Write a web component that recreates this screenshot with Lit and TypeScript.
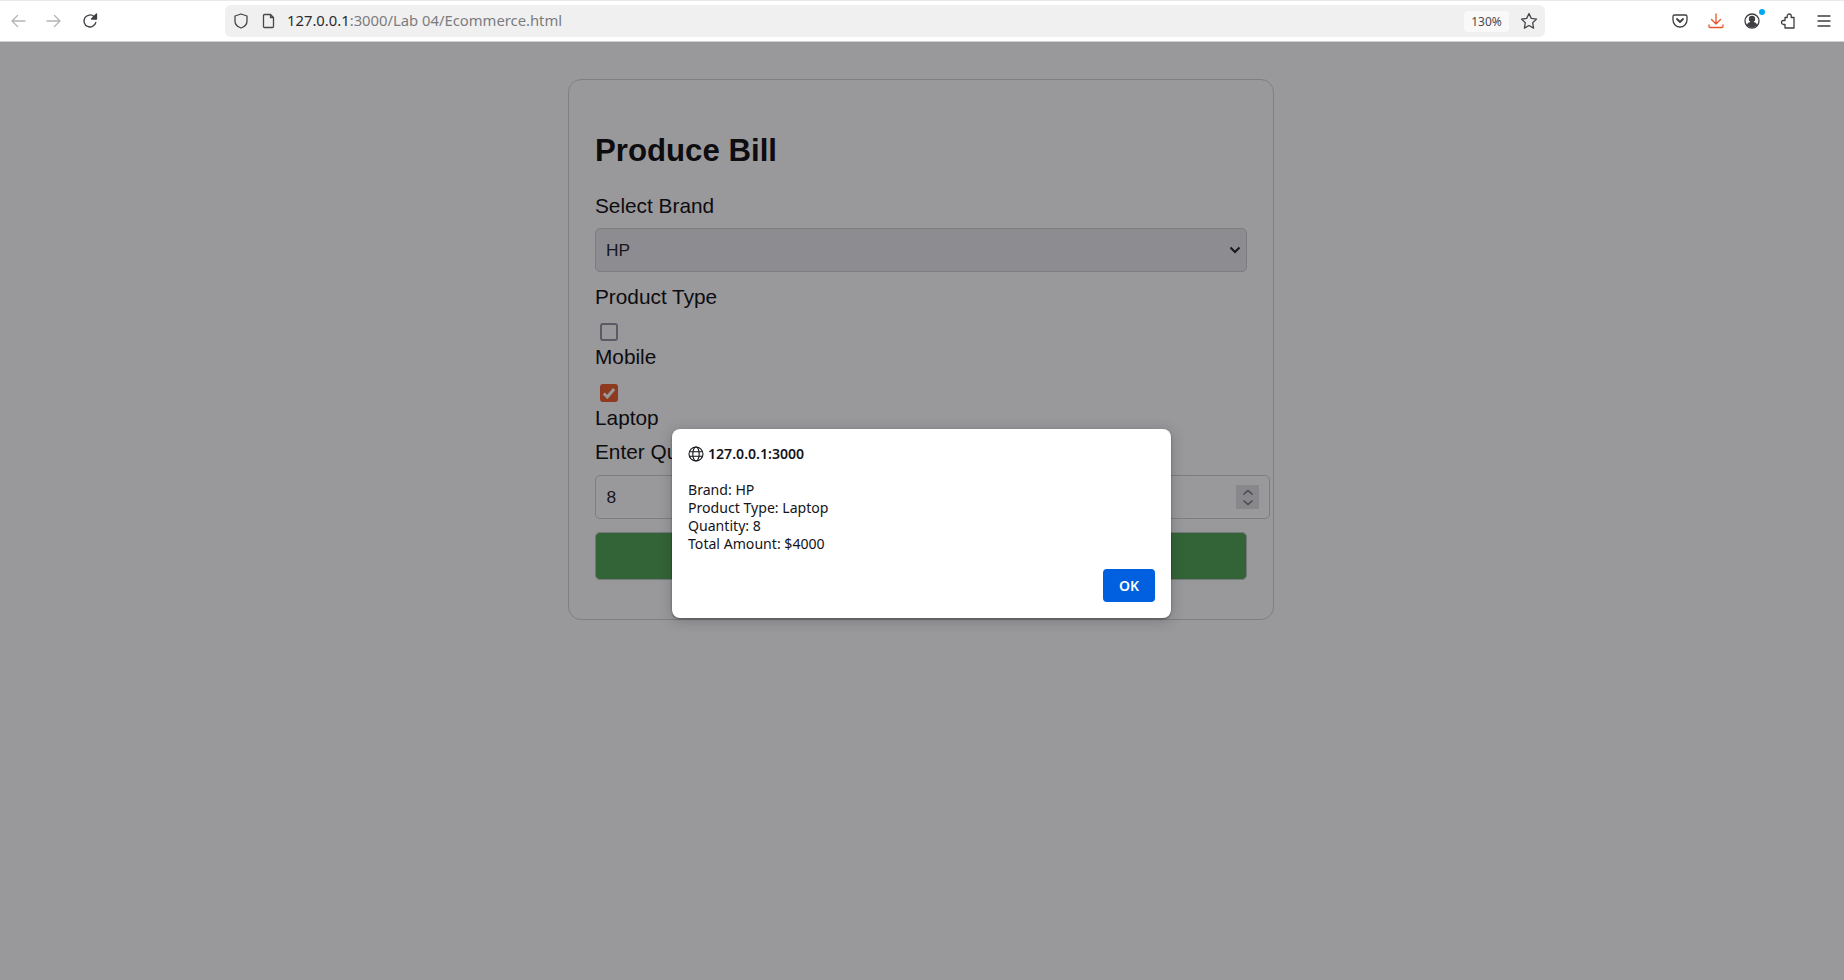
import { LitElement, css, html } from "lit";
import { customElement } from "lit/decorators.js";

@customElement("app-root")
export class AppRoot extends LitElement {
  static styles = css`
    :host {
      display: block;
      height: 980px;
      overflow: hidden;
      background: #fff;
      color: #15141a;
    }

    /* browser toolbar */
    .toolbar {
      display: flex;
      align-items: center;
      box-sizing: border-box;
      height: 42px;
      padding-right: 2px;
      background: #fff;
      border-top: 1px solid #e9e9e9;
      border-bottom: 1px solid #cfcfd3;
    }
    .tool {
      display: flex;
      flex: none;
      align-items: center;
      justify-content: center;
      width: 36px;
      height: 40px;
    }
    .tool svg {
      fill: none;
      stroke: #3f3f44;
      stroke-width: 1.3;
      stroke-linecap: round;
      stroke-linejoin: round;
    }
    .tool.off svg {
      stroke: #b4b4b6;
    }
    .tool.orange svg {
      stroke: #e8552c;
    }
    .urlbar {
      display: flex;
      flex: none;
      align-items: center;
      box-sizing: border-box;
      width: 1320px;
      height: 32px;
      margin-left: 117px;
      padding-left: 8px;
      border-radius: 6px;
      background: #f0f0f0;
      font: 14.8px "Noto Sans", "Open Sans", sans-serif;
    }
    .urlbar svg {
      flex: none;
      fill: none;
      stroke: #47474c;
      stroke-width: 1.3;
      stroke-linejoin: round;
    }
    .urlbar .file {
      margin-left: 12px;
    }
    .url {
      margin-left: 10px;
      padding-bottom: 2px;
      color: #7c7c80;
      white-space: pre;
    }
    .url b {
      font-weight: 400;
      color: #2b2a30;
    }
    .zoom {
      display: flex;
      align-items: center;
      justify-content: center;
      width: 45px;
      height: 21px;
      margin-left: auto;
      border-radius: 4px;
      background: #f9f9f9;
      font-size: 12px;
      color: #4a4a4f;
    }
    .star {
      margin: 0 7px 0 11px;
    }
    .actions {
      display: flex;
      margin-left: auto;
    }
    .badge {
      position: relative;
    }
    .badge::after {
      content: "";
      position: absolute;
      top: 8px;
      right: 5px;
      width: 6px;
      height: 6px;
      border-radius: 50%;
      background: #00a8f0;
    }

    /* the page */
    main {
      position: relative;
      height: 938px;
      padding-top: 37px;
      box-sizing: border-box;
      font-family: "Liberation Sans", Arial, sans-serif;
      color: #000;
    }
    .card {
      box-sizing: border-box;
      width: 706px;
      height: 541px;
      margin-left: 568px;
      padding: 26px;
      border: 1px solid #d0d0d0;
      border-radius: 13px;
      background: #fff;
    }
    h2 {
      margin: 27px 0 25px;
      font-size: 31.2px;
      line-height: 36px;
      font-weight: 700;
    }
    .label {
      display: block;
      font-size: 20.8px;
      line-height: 24px;
    }
    .select {
      position: relative;
      margin: 10px 0 13px;
    }
    select {
      display: block;
      box-sizing: border-box;
      width: 100%;
      height: 44px;
      padding: 0 10px 1px;
      appearance: none;
      border: 1px solid #ccc;
      border-radius: 5px;
      background: #e9e9ed;
      font: 17.33px "Liberation Sans", Arial, sans-serif;
      color: #15141a;
    }
    .chevron {
      position: absolute;
      top: 18px;
      right: 6px;
      fill: none;
      stroke: #15141a;
      stroke-width: 2;
    }
    .check {
      display: block;
      box-sizing: border-box;
      width: 18px;
      height: 18px;
      margin-left: 5px;
      border: 2px solid #8f8f9d;
      border-radius: 3px;
    }
    .check.on {
      border: 0;
      background: #e95420;
    }
    .check svg {
      display: block;
      fill: none;
      stroke: #fff;
      stroke-width: 3;
    }
    .type-a {
      margin-top: 14px;
    }
    .type-b {
      margin-top: 4px;
    }
    .gap-check {
      margin-top: 15px;
    }
    .gap-label {
      margin-top: 10px;
    }
    .qty {
      position: relative;
      margin-top: 11px;
    }
    input {
      display: block;
      box-sizing: content-box;
      width: 100%;
      height: 18px;
      padding: 12px 10.4px;
      appearance: textfield;
      border: 1px solid #ccc;
      border-radius: 5px;
      background: #fff;
      font: 17.33px "Liberation Sans", Arial, sans-serif;
      color: #15141a;
    }
    .spin {
      position: absolute;
      top: 10px;
      right: -12px;
      display: flex;
      flex-direction: column;
      align-items: center;
      justify-content: center;
      gap: 3px;
      width: 23px;
      height: 24px;
      background: #e0e0e4;
    }
    .spin svg {
      display: block;
      fill: none;
      stroke: #6f6f78;
      stroke-width: 1.6;
    }
    .submit {
      display: block;
      box-sizing: border-box;
      width: 100%;
      height: 48px;
      margin-top: 13px;
      border: 1px solid #c2c2c2;
      border-radius: 5px;
      background: #45a049;
    }

    /* alert */
    .overlay {
      position: absolute;
      inset: 0;
      background: rgba(28, 27, 34, 0.45);
    }
    .dialog {
      position: absolute;
      top: 387px;
      left: 672px;
      display: flex;
      flex-direction: column;
      box-sizing: border-box;
      width: 499px;
      height: 189px;
      padding: 16px;
      border-radius: 8px;
      background: #fff;
      box-shadow: 0 2px 14px rgba(28, 27, 34, 0.25), 0 1px 2px rgba(0, 0, 0, 0.4);
      font: 14.1px/18px "Noto Sans", "Open Sans", sans-serif;
      color: #15141a;
    }
    .origin {
      display: flex;
      align-items: center;
      gap: 4px;
      font-weight: 600;
    }
    .origin svg {
      flex: none;
      fill: none;
      stroke: #15141a;
      stroke-width: 1.1;
    }
    .body {
      margin-top: 18px;
    }
    .ok {
      box-sizing: border-box;
      width: 52px;
      height: 33px;
      margin: auto 0 0 auto;
      border: 0;
      border-radius: 4px;
      background: #0060df;
      font: 600 14px "Noto Sans", "Open Sans", sans-serif;
      color: #fff;
    }
  `;

  render() {
    return html`
      <div class="toolbar">
        <div class="tool off">
          <svg width="16" height="16" viewBox="0 0 16 16"><path d="M15 8H2M7.5 2.5 2 8l5.5 5.5" /></svg>
        </div>
        <div class="tool off">
          <svg width="16" height="16" viewBox="0 0 16 16"><path d="M1 8h13M8.5 2.5 14 8l-5.5 5.5" /></svg>
        </div>
        <div class="tool">
          <svg width="16" height="16" viewBox="0 0 16 16">
            <path d="M13.8 9.5A6 6 0 1 1 12 3.5" />
            <path d="M14.5 1v5h-5z" fill="#3f3f44" />
          </svg>
        </div>
        <div class="urlbar">
          <svg width="16" height="16" viewBox="0 0 16 16"><path d="M8 1 2 3v5c0 3.5 2.5 5.8 6 7 3.5-1.2 6-3.5 6-7V3z" /></svg>
          <svg class="file" width="16" height="16" viewBox="0 0 16 16"><path d="M3.5 1.5h6l3 3v9a1 1 0 0 1-1 1h-8a1 1 0 0 1-1-1v-11a1 1 0 0 1 1-1zM9.5 1.5v3h3" /></svg>
          <span class="url"><b>127.0.0.1</b>:3000/Lab 04/Ecommerce.html</span>
          <span class="zoom">130%</span>
          <svg class="star" width="18" height="18" viewBox="0 0 18 18"><path d="m9 1.5 2.3 4.9 5.2.7-3.8 3.7.9 5.3L9 13.5l-4.600 2.600.9-5.300L1.500 7.100l5.200-.7z" /></svg>
        </div>
        <div class="actions">
          <div class="tool">
            <svg width="16" height="16" viewBox="0 0 16 16">
              <path d="M2.5 2h11A1.500 1.500 0 0 1 15 3.500V7a7 7 0 0 1-14 0V3.500A1.500 1.500 0 0 1 2.500 2z" />
              <path d="m5 6 3 3 3-3" stroke-width="1.8" />
            </svg>
          </div>
          <div class="tool orange">
            <svg width="16" height="16" viewBox="0 0 16 16"><path d="M8 1v10M3.5 6.5 8 11l4.5-4.5M1 12v1.5a1 1 0 0 0 1 1h12a1 1 0 0 0 1-1V12" /></svg>
          </div>
          <div class="tool badge">
            <svg width="16" height="16" viewBox="0 0 16 16">
              <circle cx="8" cy="8" r="7" />
              <circle cx="8" cy="6" r="2.5" fill="#3f3f44" />
              <path d="M3.5 12c1-2 2.500-2.500 4.500-2.500s3.500.5 4.500 2.500c-1 1-2.500 1.500-4.500 1.500S4.500 13 3.500 12z" fill="#3f3f44" />
            </svg>
          </div>
          <div class="tool">
            <svg width="16" height="16" viewBox="0 0 16 16"><path d="M5 4.5h2.200V3a2 2 0 0 1 4 0v1.500H14V15H5v-3.500H3.500a2 2 0 0 1 0-4H5z" /></svg>
          </div>
          <div class="tool">
            <svg width="16" height="16" viewBox="0 0 16 16"><path d="M2 3h12M2 8h12M2 13h12" /></svg>
          </div>
        </div>
      </div>

      <main>
        <form class="card" @submit=${(e: Event) => e.preventDefault()}>
          <h2>Produce Bill</h2>
          <label class="label">Select Brand</label>
          <div class="select">
            <select><option>HP</option></select>
            <svg class="chevron" width="12" height="8" viewBox="0 0 12 8"><path d="m1.5 1.5 4.5 4.500 4.500-4.500" /></svg>
          </div>
          <label class="label">Product Type</label>
          <span class="check type-a"></span>
          <label class="label type-b">Mobile</label>
          <span class="check on gap-check">
            <svg width="18" height="18" viewBox="0 0 18 18"><path d="m3.800 9.500 3.500 3.500 6.800-8" /></svg>
          </span>
          <label class="label type-b">Laptop</label>
          <label class="label gap-label">Enter Quantity</label>
          <div class="qty">
            <input type="number" value="8" />
            <div class="spin">
              <svg width="12" height="7" viewBox="0 0 12 7"><path d="m1.500 5.500 4.500-4 4.500 4" /></svg>
              <svg width="12" height="7" viewBox="0 0 12 7"><path d="m1.500 1.500 4.500 4 4.500-4" /></svg>
            </div>
          </div>
          <button class="submit" type="button"></button>
        </form>

        <div class="overlay"></div>
        <div class="dialog">
          <div class="origin">
            <svg width="16" height="16" viewBox="0 0 16 16">
              <circle cx="8" cy="8" r="7" />
              <ellipse cx="8" cy="8" rx="3.200" ry="7" />
              <path d="M1.500 5.800h13M1.500 10.200h13" />
            </svg>
            127.0.0.1:3000
          </div>
          <div class="body">
            Brand: HP<br />
            Product Type: Laptop<br />
            Quantity: 8<br />
            Total Amount: $4000
          </div>
          <button class="ok" type="button">OK</button>
        </div>
      </main>
    `;
  }
}
